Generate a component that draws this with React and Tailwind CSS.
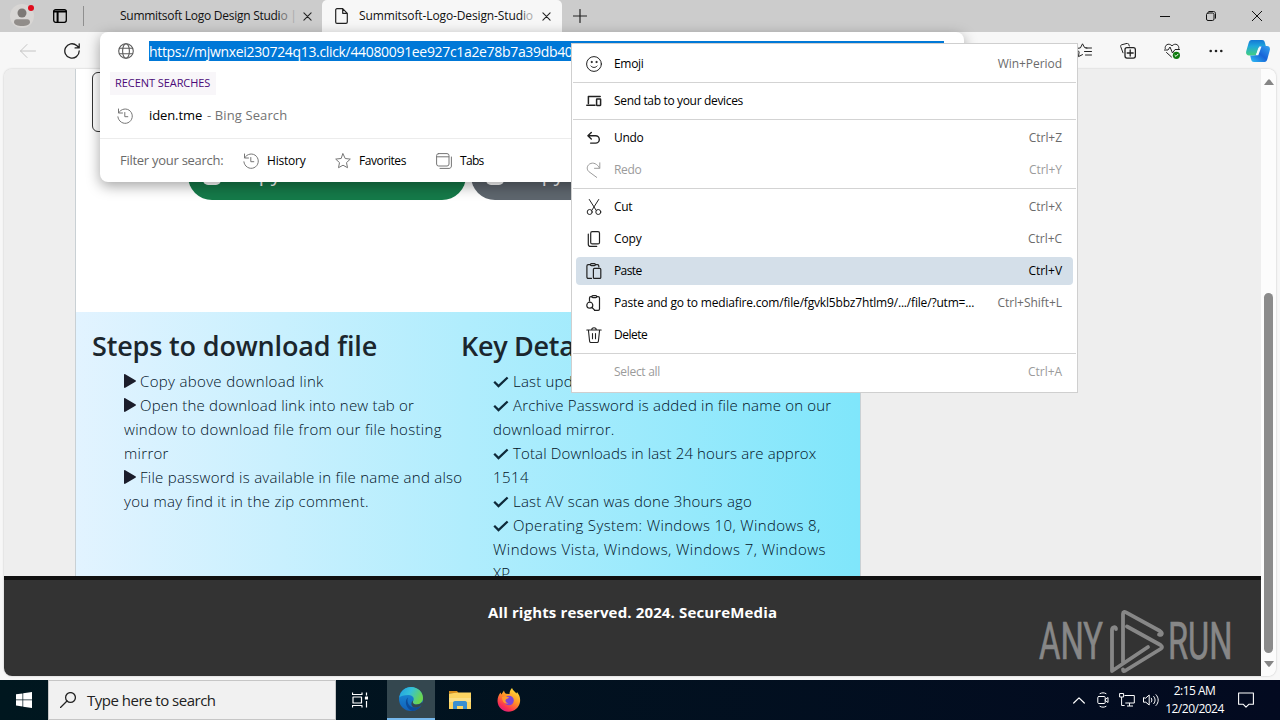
import React from 'react';
import { clsx } from 'clsx';

// Small stroke icon wrapper, 16x16 grid by default
function Icon({ children, className = 'size-4', box = '0 0 16 16', sw = 1 }) {
  return (
    <svg
      viewBox={box}
      className={clsx('shrink-0', className)}
      fill="none"
      stroke="currentColor"
      strokeWidth={sw}
      strokeLinecap="round"
      strokeLinejoin="round"
    >
      {children}
    </svg>
  );
}

const HistoryIcon = ({ className }) => (
  <Icon className={className}>
    <path d="M1.500 1v4h4M1.700 4.800A7.200 7.200 0 1 1 .9 8.800" />
    <path d="M7.800 4.500V8.700h3" />
  </Icon>
);

const CloseIcon = ({ className }) => (
  <Icon className={className} box="0 0 10 10" sw={1.2}>
    <path d="M1 1l8 8M9 1L1 9" />
  </Icon>
);

const menuIcons = {
  emoji: (
    <Icon>
      <circle cx="8" cy="8" r="7.4" />
      <path d="M4.900 10c1.500 2 4.700 2 6.200 0" />
      <circle cx="5.600" cy="6" r=".6" fill="currentColor" />
      <circle cx="10.400" cy="6" r=".6" fill="currentColor" />
    </Icon>
  ),
  send: (
    <Icon sw={1.5}>
      <path d="M2.400 10.500V3.400h11.800M.8 12.200h8.200" />
      <rect x="10.600" y="6" width="4" height="6.400" rx=".4" />
    </Icon>
  ),
  undo: (
    <Icon sw={1.4}>
      <path d="M5.300 2.400L1.900 5.700l3.400 3.200M2.200 5.700h7.400a3.700 3.700 0 0 1 0 7.400H4.600" />
    </Icon>
  ),
  redo: (
    <Icon>
      <path d="M13.800.8v5.500H8.500M13.500 6C11.500 2 7.200-.2 3.600 2c-3 2-3 5.600-.8 7.600l7.900 5.800" />
    </Icon>
  ),
  cut: (
    <Icon>
      <path d="M3.300.5l6.900 10.900M12.700.5L5.800 11.400" />
      <circle cx="3.700" cy="13" r="2.500" />
      <circle cx="12.300" cy="13" r="2.500" />
    </Icon>
  ),
  copy: (
    <Icon sw={1.2}>
      <rect x="4.700" y=".7" width="8.800" height="12.200" rx="1.500" />
      <path d="M2.300 3v10.200c0 1.300.9 2.200 2.200 2.200h6.200" />
    </Icon>
  ),
  paste: (
    <Icon sw={1.2}>
      <path d="M5.500 15.400H2.200a1.300 1.300 0 0 1-1.300-1.300V2.900c0-.7.600-1.300 1.300-1.300h2.300M9.500 1.600h2c.7 0 1.300.6 1.300 1.300v1" />
      <rect x="4.400" y=".6" width="5" height="2" rx="1" />
      <rect x="7.400" y="5.400" width="7.400" height="10" rx="1" />
    </Icon>
  ),
  pasteGo: (
    <Icon sw={1.2}>
      <path d="M3.500 6V2.900c0-.7.600-1.300 1.300-1.300h1M10.800 1.600h1.400c.7 0 1.300.6 1.300 1.300v11.200c0 .7-.6 1.300-1.300 1.300H8.500" />
      <rect x="5.800" y=".6" width="5" height="2" rx="1" />
      <circle cx="3.800" cy="10.200" r="3" />
      <path d="M6 12.500l2.600 2.700" />
    </Icon>
  ),
  trash: (
    <Icon sw={1.1}>
      <path d="M.8 3h14.400M5.700 3c0-3 4.600-3 4.600 0M2.400 3l1.200 11.200c.1.800.6 1.300 1.400 1.300h6c.8 0 1.300-.5 1.400-1.300L13.600 3M6.500 6.500v5.200M9.500 6.500v5.200" />
    </Icon>
  ),
};

const menuGroups = [
  [{ label: 'Emoji', keys: 'Win+Period', icon: 'emoji' }],
  [{ label: 'Send tab to your devices', icon: 'send', tracking: 'tracking-[-0.34px]' }],
  [
    { label: 'Undo', keys: 'Ctrl+Z', icon: 'undo' },
    { label: 'Redo', keys: 'Ctrl+Y', icon: 'redo', disabled: true },
  ],
  [
    { label: 'Cut', keys: 'Ctrl+X', icon: 'cut' },
    { label: 'Copy', keys: 'Ctrl+C', icon: 'copy', tracking: 'tracking-[-0.1px]' },
    { label: 'Paste', keys: 'Ctrl+V', icon: 'paste', tracking: 'tracking-[-0.6px]' },
    {
      label: 'Paste and go to mediafire.com/file/fgvkl5bbz7htlm9/.../file/?utm=...',
      keys: 'Ctrl+Shift+L',
      icon: 'pasteGo',
      tracking: 'tracking-[-0.18px]',
    },
    { label: 'Delete', icon: 'trash', tracking: 'tracking-[-0.5px]' },
  ],
  [{ label: 'Select all', keys: 'Ctrl+A', disabled: true }],
];

function MenuItem({ item, active }) {
  return (
    <div className="h-8 px-1 py-0.5">
      <div
        className={clsx(
          'flex h-7 items-center rounded pl-[10px] pr-[11px] text-[12px]',
          active && 'bg-[#d4dfe9]',
          item.disabled ? 'text-[#9b9b9b]' : 'text-black'
        )}
      >
        <span className={clsx('w-7 shrink-0', !item.disabled && 'text-[#222]')}>{item.icon && menuIcons[item.icon]}</span>
        <span className={clsx('whitespace-nowrap', item.tracking || 'tracking-[-0.3px]')}>{item.label}</span>
        <span
          className={clsx(
            'ml-auto whitespace-nowrap tracking-[-0.05px]',
            !active && !item.disabled && 'text-[#6b6b6b]'
          )}
        >
          {item.keys}
        </span>
      </div>
    </div>
  );
}

function ContextMenu() {
  return (
    <div className="absolute left-[571px] top-[43px] h-[350px] w-[507px] border border-[#cfcfcf] bg-white py-1">
      {menuGroups.map((group, i) => (
        <React.Fragment key={i}>
          {i > 0 && (
            <div className="flex h-[5px] items-center px-px">
              <div className="h-px w-full bg-[#d3d3d3]" />
            </div>
          )}
          {group.map((item) => (
            <MenuItem key={item.label} item={item} active={item.label === 'Paste'} />
          ))}
        </React.Fragment>
      ))}
    </div>
  );
}

function TabStrip() {
  return (
    <div className="flex h-8 shrink-0 items-center bg-[#ccc]">
      {/* Profile */}
      <div className="relative ml-[10px] flex size-6 items-center justify-center rounded-full bg-[#d8d6d4]">
        <svg viewBox="0 0 16 18" className="mt-[2px] h-[18px] w-4" fill="#7d7976">
          <circle cx="8" cy="5" r="4.500" />
          <path d="M0 14.200c0-1.700 1-3 2.800-3h10.400c1.800 0 2.800 1.300 2.800 3C16 16.500 12.500 18 8 18s-8-1.500-8-3.800z" fill="#918d8a" />
        </svg>
        <span className="absolute left-[18px] top-[1px] size-[6px] rounded-full bg-[#e00b1c]" />
      </div>
      <Icon className="ml-[19px] h-[14px] w-[14px] text-black" box="0 0 14 14" sw={1.3}>
        <rect x=".7" y=".7" width="12.600" height="12.600" rx="2" />
        <path d="M1 2.400h12M4.600 3v10" strokeWidth="2" />
      </Icon>
      <div className="ml-4 h-5 w-px bg-[#8f8f8f]" />
      <div className="ml-9 w-[175px] whitespace-nowrap text-[12px] tracking-[-0.27px] text-[#111]">
        Summitsoft Logo Design Studi<span className="text-[#777]">o</span> <span className="text-[#aaa]">|</span>
      </div>
      <CloseIcon className="ml-[8px] size-[9px] text-[#222]" />
      {/* Active tab */}
      <div className="ml-[10px] flex h-8 w-[240px] items-center rounded-t-[5px] bg-[#f7f7f7] pl-[13px]">
        <Icon className="h-4 w-[13px] text-[#222]" box="0 0 13 16" sw={1.2}>
          <path d="M2 .7h5.700l4.600 4.600v8.700c0 .8-.5 1.300-1.300 1.300H2c-.8 0-1.300-.5-1.300-1.300V2C.7 1.200 1.200.7 2 .7zM7.700.9v4.400h4.400" />
        </Icon>
        <div className="ml-[11px] w-[174px] whitespace-nowrap text-[12px] tracking-[-0.12px] text-[#111]">
          Summitsoft-Logo-Design-Stud<span className="text-[#666]">i</span>
          <span className="text-[#aaa]">o</span>
        </div>
        <CloseIcon className="ml-[9px] size-[9px] text-[#222]" />
      </div>
      <Icon className="ml-[11px] size-[14px] text-[#222]" box="0 0 14 14" sw={1.2}>
        <path d="M7 .5v13M.5 7h13" />
      </Icon>
      <div className="ml-auto mr-[18px] flex items-center gap-9 text-[#111]">
        <Icon className="size-[10px]" box="0 0 10 10">
          <path d="M0 5.500h10" />
        </Icon>
        <Icon className="size-[10px]" box="0 0 10 10">
          <rect x=".5" y="2" width="7.500" height="7.500" rx="1.500" />
          <path d="M2.800.5h4.700c1.200 0 2 .8 2 2v4.700" />
        </Icon>
        <Icon className="size-[10px]" box="0 0 10 10">
          <path d="M0 0l10 10M10 0L0 10" />
        </Icon>
      </div>
    </div>
  );
}

function Toolbar() {
  return (
    <div className="flex h-[37px] shrink-0 items-center bg-[#f7f7f7]">
      <Icon className="ml-5 size-4 text-[#c4c4c4]">
        <path d="M.5 8h15M7 1.500L.5 8 7 14.500" />
      </Icon>
      <Icon className="ml-7 size-4 text-[#222]" sw={1.3}>
        <path d="M15.200 8A7.200 7.200 0 1 1 12.700 2.500L15 4.800M15.200.8v4.100h-4.100" />
      </Icon>
      <div className="ml-auto mr-[10px] flex items-center text-[#222]">
        <Icon className="mr-7 size-4">
          <path d="M11 5l-2.400-.4L6.500.8 4.400 4.900l-4.500.7 3.200 3.300-.6 4.700 4-2M10 5h5.500M8.500 8.500h7M9.500 12h6" />
        </Icon>
        <Icon className="mr-7 size-4">
          <path d="M3 9.800L.7 3.600c-.3-.8.100-1.500.8-1.800L7 .4c.8-.2 1.500.2 1.700.9l.6 1.700" />
          <rect x="5" y="4.700" width="10.400" height="10.400" rx="2" strokeWidth="1.300" />
          <path d="M10.200 7v6M7.200 10h6" strokeWidth="1.300" />
        </Icon>
        <Icon className="mr-[29px] size-4">
          <path d="M1.200 5.500C.5 2 4.500-.6 8 2.800c3.500-3.400 7.500-.8 6.800 2.700M0 7h4l2-3 2.500 6L11 6.500h4.500M2.500 9.500L7.500 14" />
          <circle cx="12.400" cy="12.300" r="3.600" fill="#107c10" stroke="none" />
          <path d="M10.900 12.400l1.100 1 2-2.200" stroke="#fff" />
        </Icon>
        <Icon className="mr-[23px] h-1 w-[14px]" box="0 0 14 4">
          <g fill="currentColor" stroke="none">
            <circle cx="1.700" cy="2" r="1.300" />
            <circle cx="7" cy="2" r="1.300" />
            <circle cx="12.300" cy="2" r="1.300" />
          </g>
        </Icon>
        {/* Copilot */}
        <svg viewBox="0 0 24 22" className="h-[22px] w-6">
          <defs>
            <linearGradient id="cpA" x1="0" y1="0" x2="0" y2="1">
              <stop offset="0" stopColor="#1478d4" />
              <stop offset=".4" stopColor="#1fa6dc" />
              <stop offset="1" stopColor="#43d07f" />
            </linearGradient>
            <linearGradient id="cpB" x1="0" y1="1" x2="1" y2="0">
              <stop offset="0" stopColor="#2fc0f5" />
              <stop offset=".5" stopColor="#1764d8" />
              <stop offset="1" stopColor="#35a4f0" />
            </linearGradient>
          </defs>
          <path d="M5.500 0H16c2 0 2.500 1 3 3l.8 3H16c-2.500 0-3.500 1.200-4.200 3.500L10 15.500H3C.5 15.500-.4 13.500.3 11L2.600 3C3.200 1 4 0 5.500 0z" fill="url(#cpA)" />
          <path d="M18.500 22H8c-2 0-2.500-1-3-3l-.8-3.500H8c2.500 0 3.500-1 4.200-3.300L14 6h7c2.500 0 3.400 2 2.700 4.500L21.400 19c-.6 2-1.400 3-2.900 3z" fill="url(#cpB)" />
          <path d="M13.500 6.500h2l-3.200 8.800h-2.600z" fill="#f3faff" />
        </svg>
      </div>
    </div>
  );
}

function Omnibox() {
  return (
    <div className="absolute left-[100px] top-8 h-[150px] w-[864px] rounded-lg bg-white shadow-[0_4px_14px_rgba(0,0,0,0.36)]">
      <div className="flex h-[38px] items-center pl-[18px]">
        <Icon className="size-4 text-[#5c5c5c]" sw={1.1}>
          <circle cx="8" cy="8" r="7.300" />
          <ellipse cx="8" cy="8" rx="3.400" ry="7.300" />
          <path d="M1.400 5.300h13.200M1.400 10.700h13.200" />
        </Icon>
        <div className="ml-[15px] flex h-5 w-[795px] items-center bg-[#0078d7] text-[14px] tracking-[-0.33px] text-white">
          https://mjwnxei230724q13.click/44080091ee927c1a2e78b7a39db40
        </div>
      </div>
      <div className="ml-[10px] mt-[2px] flex h-[23px] w-[106px] items-center bg-[#f8f6f9] pl-[5px] text-[11px] tracking-[-0.06px] text-[#4b0a78]">
        <span className="whitespace-nowrap">RECENT SEARCHES</span>
      </div>
      <div className="flex h-[43px] items-center pb-[2px] pl-[17px] text-[13px]">
        <HistoryIcon className="size-4 text-[#767676]" />
        <span className="ml-4 tracking-[-0.1px] text-black">iden.tme</span>
        <span className="ml-[5px] tracking-[0.1px] text-[#737373]">- Bing Search</span>
      </div>
      <div className="flex h-[44px] items-center border-t border-[#ececec] pl-5 text-[12px] text-black">
        <span className="w-[123px] text-[13px] tracking-[-0.27px] text-[#6a6a6a]">Filter your search:</span>
        <HistoryIcon className="size-4 text-[#767676]" />
        <span className="ml-2 w-[68px] tracking-[-0.2px]">History</span>
        <Icon className="size-4 text-[#767676]">
          <path d="M8 .8l2.200 4.700 5.100.6-3.800 3.500 1 5.100L8 12.200l-4.500 2.500 1-5.100L.7 6.100l5.100-.6z" />
        </Icon>
        <span className="ml-2 w-[77px] tracking-[-0.42px]">Favorites</span>
        <Icon className="size-4 text-[#767676]">
          <rect x=".6" y=".6" width="12.400" height="12.400" rx="2" />
          <path d="M.8 3.800h12M15.400 4v9c0 1.400-1 2.400-2.400 2.400H4" />
        </Icon>
        <span className="ml-2 tracking-[-0.7px]">Tabs</span>
      </div>
    </div>
  );
}

const PlayMark = () => (
  <svg viewBox="0 0 12 14" className="mr-1 inline-block h-[14px] w-3 align-[-1px]" fill="#1b1d2b">
    <path d="M0 .8C0 .1.600-.1 1.200.2l10.200 6c.7.4.7 1.200 0 1.600l-10.200 6c-.6.300-1.200 0-1.200-.6z" />
  </svg>
);

const CheckMark = () => (
  <svg viewBox="0 0 16 12" className="mr-1 inline-block h-3 w-4 align-[-1px]" fill="none" stroke="#0f2a3a" strokeWidth="2.300">
    <path d="M1.200 5.800l4.300 4.300L14.600 1.500" />
  </svg>
);

// One text line per entry; `mark` starts a new bullet
const steps = [
  { mark: true, text: 'Copy above download link', tracking: 'tracking-[0.33px]' },
  { mark: true, text: 'Open the download link into new tab or', tracking: 'tracking-[0.19px]' },
  { text: 'window to download file from our file hosting', tracking: 'tracking-[0.31px]' },
  { text: 'mirror', tracking: 'tracking-[0.3px]' },
  { mark: true, text: 'File password is available in file name and also', tracking: 'tracking-[0.25px]' },
  { text: 'you may find it in the zip comment.', tracking: 'tracking-[0.26px]' },
];

const details = [
  { mark: true, text: 'Last updated', tracking: 'tracking-[0.2px]' },
  { mark: true, text: 'Archive Password is added in file name on our', tracking: 'tracking-[0.18px]' },
  { text: 'download mirror.', tracking: 'tracking-[0.3px]' },
  { mark: true, text: 'Total Downloads in last 24 hours are approx', tracking: 'tracking-[0.14px]' },
  { text: '1514', tracking: 'tracking-[0.4px]' },
  { mark: true, text: 'Last AV scan was done 3hours ago', tracking: 'tracking-[0.2px]' },
  { mark: true, text: 'Operating System: Windows 10, Windows 8,', tracking: 'tracking-[0.35px]' },
  { text: 'Windows Vista, Windows, Windows 7, Windows', tracking: 'tracking-[0.44px]' },
  { text: 'XP', tracking: 'tracking-[0.2px]' },
];

function Lines({ items, Mark }) {
  return (
    <ul className="mt-[6px] pl-8 text-[15px] font-light leading-6 text-[#00111f]">
      {items.map((line, i) => (
        <li key={i} className={clsx('h-6 whitespace-nowrap', line.tracking)}>
          {line.mark && <Mark />}
          {line.text}
        </li>
      ))}
    </ul>
  );
}

function PillButton({ color }) {
  return (
    <div className={clsx('flex h-12 w-[278px] items-center rounded-full pl-[15px] text-[20px] text-white', color)}>
      <svg viewBox="0 0 18 18" className="size-[18px]" fill="#fff">
        <rect width="18" height="18" rx="5" />
      </svg>
      <span className="mb-[5px] ml-[13px]">Copy</span>
    </div>
  );
}

function Page() {
  return (
    <div className="flex min-w-0 flex-1 flex-col bg-[#eee]">
      <div className="flex h-[507px] overflow-hidden pl-[71px]">
        <div className="flex w-[786px] flex-col border-x border-[#c9d0d4] bg-white">
          <div className="h-[243px] shrink-0 pl-4 pt-[3px]">
            <div className="h-[60px] w-[700px] rounded-md border border-[#333]" />
            <div className="ml-24 mt-5 flex gap-[5px]">
              <PillButton color="bg-[#157a49]" />
              <PillButton color="bg-[#5e666e]" />
            </div>
          </div>
          <div className="flex h-[264px] shrink-0 bg-linear-to-r from-[#e2f3ff] via-[#b0edfd] to-[#7fe6fb] pl-4 pt-[17px] text-[#1b262d]">
            <div className="w-[369px]">
              <h3 className="whitespace-nowrap text-[27px] font-semibold leading-[34px] tracking-[-0.16px]">Steps to download file</h3>
              <Lines items={steps} Mark={PlayMark} />
            </div>
            <div>
              <h3 className="whitespace-nowrap text-[27px] font-semibold leading-[34px] tracking-[-0.3px]">Key Details</h3>
              <Lines items={details} Mark={CheckMark} />
            </div>
          </div>
        </div>
      </div>
      <footer className="flex h-[100px] justify-center border-t-4 border-[#111] bg-[#333] pt-5 text-[15px] font-bold leading-6 tracking-[0.14px] text-white">
        All rights reserved. 2024. SecureMedia
      </footer>
    </div>
  );
}

function Scrollbar() {
  return (
    <div className="flex w-[15px] shrink-0 flex-col items-center bg-[#fcfcfc] pt-[10px]">
      <svg viewBox="0 0 10 6" className="h-[6px] w-[10px]" fill="#858585">
        <path d="M0 6l4-5.300c.6-.7 1.400-.7 2 0L10 6z" />
      </svg>
      <div className="mt-[208px] h-[360px] w-[9px] rounded-full bg-[#8b8b8b]" />
      <svg viewBox="0 0 10 6" className="mt-2 h-[6px] w-[10px]" fill="#858585">
        <path d="M0 0l4 5.300c.6.7 1.400.7 2 0L10 0z" />
      </svg>
    </div>
  );
}

function Watermark() {
  return (
    <svg viewBox="0 0 196 66" className="absolute left-[1037px] top-[608px] h-[66px] w-[196px] opacity-90">
      <g fill="#919191" stroke="#919191" strokeWidth=".7" fontFamily="Roboto, sans-serif" fontSize="52" fontWeight="400">
        <text x="2" y="51" textLength="64" lengthAdjust="spacingAndGlyphs">ANY</text>
        <text x="131" y="51" textLength="64.500" lengthAdjust="spacingAndGlyphs">RUN</text>
      </g>
      <g fill="none" stroke="#919191" strokeWidth="3.800" strokeLinejoin="round" strokeLinecap="round">
        <path d="M79 21c0-3-4-2-4 1v41L111 39" />
        <path d="M86 54V6c0-2.500 1.500-2.500 3-1.600L123 23c3 2 2 5-1 3.500" />
        <path d="M90 18.500l33.500 18.500c2 1.300 2 2.700 0 4L88.500 62.500c-2 1-2.500.500-2.500-1" />
      </g>
    </svg>
  );
}

function Taskbar() {
  return (
    <div className="flex h-10 shrink-0 items-stretch bg-linear-to-r from-[#00171f] to-[#030a20] text-white">
      <div className="flex w-12 items-center justify-center">
        <svg viewBox="0 0 16 16" className="size-4" fill="#fff">
          <path d="M0 2.300L6.500 1.400v6.200H0zM7.200 1.300L16 0v7.600H7.200zM0 8.300h6.500v6.200L0 13.600zM7.200 8.300H16V16l-8.800-1.300z" />
        </svg>
      </div>
      <div className="flex w-72 items-center border border-[#c6c6c6] bg-[#f1f1f1] pl-[11px] text-[#222]">
        <Icon className="size-4" sw={1.3}>
          <circle cx="10.500" cy="5.500" r="4.900" />
          <path d="M7 9L.5 15.500" />
        </Icon>
        <span className="ml-[11px] whitespace-nowrap text-[15px] tracking-[-0.5px]">Type here to search</span>
      </div>
      <div className="flex w-[51px] items-center justify-center pr-1">
        <Icon className="size-4" sw={1.2}>
          <path d="M.5.5v2h9.500v-2M.5 15.500v-2h9.500v2M14.500.5v3M14.500 9v6.500" strokeLinecap="butt" />
          <rect x="1" y="5" width="8.500" height="6" />
          <rect x="13.500" y="5" width="2" height="2" fill="#fff" />
        </Icon>
      </div>
      {/* Edge */}
      <div className="flex w-12 items-center justify-center border-b-2 border-[#76b9ed] bg-[#34474f]">
        <svg viewBox="0 0 24 24" className="size-6">
          <defs>
            <linearGradient id="edA" x1="0" y1="0" x2="1" y2=".4">
              <stop offset="0" stopColor="#1f9fe0" />
              <stop offset=".5" stopColor="#35c1d8" />
              <stop offset="1" stopColor="#6bd64f" />
            </linearGradient>
            <linearGradient id="edB" x1="0" y1="0" x2="0" y2="1">
              <stop offset="0" stopColor="#1b93dc" />
              <stop offset="1" stopColor="#1160b8" />
            </linearGradient>
          </defs>
          <circle cx="12" cy="12" r="12" fill="url(#edB)" />
          <path d="M.3 10.500C1.500 4 6.500 0 12 0c7 0 12 5 12 11 0 4-3 6.500-6.500 6.500-3 0-4.500-1.500-3.500-3 1.800-2.500.5-6.500-4.500-6.500C5 8 1.500 9 .3 10.500z" fill="url(#edA)" />
          <path d="M9 10.500c-2 5 1.500 10 6.500 10 2.500 0 4.500-.5 6.500-2-1.500 3-5 5.200-8.500 5.500C7.500 22.500 4.500 14 9 10.500z" fill="#0d4c9a" />
          <path d="M14.200 13.200c-1.200 2.300.3 4.300 3.300 4.300 2 0 4-.7 5.300-2.200L24 16.500l-2 2c-2 1.500-4 2-6.500 2-3-.5-4.500-4.500-1.300-7.300z" fill="#34474f" />
        </svg>
      </div>
      {/* File Explorer */}
      <div className="flex w-[49px] items-center justify-center">
        <svg viewBox="0 0 22 18" className="h-[18px] w-[22px]">
          <path d="M0 0h8l2 2.500H0z" fill="#d98f1c" />
          <path d="M0 2.500L10 1.500h12V18H0z" fill="#fcd462" />
          <path d="M0 7h22v4H0z" fill="#fbdf86" />
          <path d="M4 18v-6c0-1 .5-2 2-2h10c1.500 0 2 1 2 2v6h-4v-3H8v3z" fill="#3a8fd0" />
        </svg>
      </div>
      {/* Firefox */}
      <div className="flex w-[49px] items-center justify-center">
        <svg viewBox="0 0 24 24" className="size-6">
          <defs>
            <linearGradient id="ffA" x1=".8" y1="0" x2=".2" y2="1">
              <stop offset="0" stopColor="#ffe53b" />
              <stop offset=".45" stopColor="#ff9226" />
              <stop offset=".8" stopColor="#fb2f52" />
              <stop offset="1" stopColor="#d01c8a" />
            </linearGradient>
          </defs>
          <path d="M15 0c1 2.500 3 3.500 4.500 5.500L20 4c2.500 3 3.500 6 3 10-1 6-6 9.700-11.500 9.700S.7 19.500.5 13c0-3.500 1.300-6.500 3-8.500l.8 2L7 2.500c.2 1.500 1 2.500 2 3.300l3.500.2C12.500 3.500 13.500 1.500 15 0z" fill="url(#ffA)" />
          <circle cx="12" cy="12.500" r="4.800" fill="#7b45d8" />
          <path d="M5 9c3-1.500 5 0 7 .3-.5 1.700-3.500 1.200-3.500 3.500 0 1.500 1.500 2.500 3 2.500-4 1.200-6.500-2-6.500-6.300z" fill="#ff9a2e" />
        </svg>
      </div>
      {/* Tray */}
      <div className="ml-auto flex items-center">
        <Icon className="h-[7px] w-3" box="0 0 12 7" sw={1.2}>
          <path d="M.7 6L6 .9 11.300 6" />
        </Icon>
        <Icon className="ml-3 h-4 w-3" box="0 0 12 16">
          <path d="M3 1.600c2-1.100 4-1.100 6 0M3 14.400c2 1.100 4 1.100 6 0" />
          <rect x=".8" y="4.500" width="7.400" height="7" rx="1" />
          <path d="M8.200 7.500L11 5.500v5l-2.800-2" />
        </Icon>
        <Icon className="ml-[10px] size-4">
          <path d="M5.500 3.500h9.800v7.500h-9M8 14h6M10.500 11v3" strokeLinecap="butt" />
          <path d="M.6 1.500h4v3.500h-4zM2.600 5v8.500h3" strokeLinecap="butt" />
        </Icon>
        <Icon className="ml-2 h-[14px] w-4" box="0 0 16 14">
          <path d="M.5 5v4.200h2.300L6.200 12V2L2.800 5zM8.300 5.200c.8 1.200.8 2.600 0 3.800M10.700 3.500c1.900 2.200 1.900 5 0 7.200M13 1.700c3 3.200 3 7.600 0 10.800" />
        </Icon>
        <div className="ml-[6px] flex w-[59px] flex-col items-center whitespace-nowrap text-[12px] leading-[18px] tracking-[-0.5px]">
          <span>2:15 AM</span>
          <span>12/20/2024</span>
        </div>
        <Icon className="ml-[14px] mr-[25px] size-4" sw={1.1}>
          <path d="M.6 1h14.800v11.300h-4.600L8 15.200l-2.700-2.900H.6z" />
        </Icon>
        <div className="mr-px" />
      </div>
    </div>
  );
}

export default function App() {
  return (
    <div className="relative flex h-[720px] w-[1280px] flex-col overflow-hidden bg-[#f7f7f7] font-['Open_Sans',sans-serif]">
      <TabStrip />
      <Toolbar />
      <div className="mb-1 ml-1 mr-1 flex h-[607px] shrink-0 overflow-hidden rounded-lg shadow-[0_0_2px_rgba(0,0,0,0.25)]">
        <Page />
        <Scrollbar />
      </div>
      <Taskbar />
      <Omnibox />
      <ContextMenu />
      <Watermark />
    </div>
  );
}
